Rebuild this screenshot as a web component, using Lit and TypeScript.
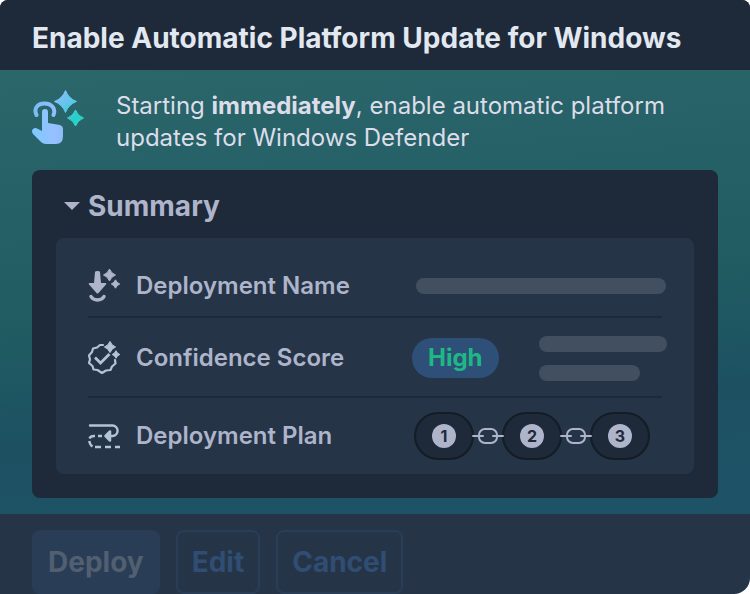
import { LitElement, html, svg, css } from "lit";
import { customElement } from "lit/decorators.js";

const sparkle = (cx: number, cy: number, r: number, fill: string) => {
  const k = r * 0.28;
  return svg`<path fill=${fill} stroke=${fill} stroke-width="1" stroke-linejoin="round"
    d="M${cx} ${cy - r}Q${cx + k} ${cy - k} ${cx + r} ${cy}Q${cx + k} ${cy + k} ${cx} ${cy + r}Q${cx - k} ${cy + k} ${cx - r} ${cy}Q${cx - k} ${cy - k} ${cx} ${cy - r}Z"/>`;
};

const touchIcon = svg`<svg class="touch" viewBox="0 0 52 56" aria-hidden="true">
  <defs>
    <linearGradient id="hand" gradientUnits="userSpaceOnUse" x1="0" y1="40" x2="31" y2="40">
      <stop offset="0" stop-color="#7dcaff"/><stop offset=".75" stop-color="#98bfff"/><stop offset="1" stop-color="#8cbcf8"/>
    </linearGradient>
    <linearGradient id="arc" gradientUnits="userSpaceOnUse" x1="2" y1="20" x2="24" y2="20">
      <stop offset="0" stop-color="#7bbcf4"/><stop offset="1" stop-color="#8fc0fb"/>
    </linearGradient>
    <linearGradient id="star" gradientUnits="userSpaceOnUse" x1="22" y1="4" x2="50" y2="34">
      <stop offset="0" stop-color="#8dbcff"/><stop offset=".45" stop-color="#58c8e4"/><stop offset=".8" stop-color="#25cfc9"/><stop offset="1" stop-color="#33dcc6"/>
    </linearGradient>
  </defs>
  <path d="M4.500 25C1.500 19 5 13.500 12.500 13.500S24 19 21.500 25" fill="none" stroke="url(#arc)" stroke-width="4" stroke-linecap="round"/>
  <path d="M10 22a3 3 0 0 1 6 0V33L28 35Q31 36 31 39V46Q31 54 24 54H14Q11 54 9 52L1 44Q-1 41 1 39Q3 37 6 39L10 41Z" fill="url(#hand)"/>
  ${sparkle(33.5, 11.5, 11, "url(#star)")}
  ${sparkle(43.5, 28, 8, "url(#star)")}
</svg>`;

const deployIcon = svg`<svg class="icon" viewBox="0 0 32 34" aria-hidden="true">
  <path d="M7 3Q7 2 9.500 2T12 3L13 14H17.500Q19 14 18 15.500L10.500 24Q9.500 25 8.500 24L1 15.500Q0 14 1.500 14H6Z" fill="#aeb4ca"/>
  <path d="M3 27.500Q5 31 9.500 31T16 27.500" fill="none" stroke="#aeb4ca" stroke-width="3.500" stroke-linecap="round"/>
  ${sparkle(21.500, 6, 6, "#aeb4ca")}
  ${sparkle(27.500, 15, 4.200, "#aeb4ca")}
</svg>`;

const scoreIcon = svg`<svg class="icon" viewBox="0 0 32 34" aria-hidden="true">
  <path d="M15 4L12 4L9 6.500L5 7.500L4 11L1 14.500L2 18.500L1 22L4.500 25L5.500 28.500L9.500 29L14 32L18 29.500L22.500 29L24 25.500L27.500 22.500L27 19" fill="none" stroke="#b3c3d8" stroke-width="2.200" stroke-linejoin="round" stroke-linecap="round"/>
  <path d="M8 17.500L12.500 22L20.500 14" fill="none" stroke="#b3c3d8" stroke-width="2.800" stroke-linecap="square"/>
  ${sparkle(22, 6, 5.600, "#b3c3d8")}
  ${sparkle(28, 13.500, 3.800, "#b3c3d8")}
</svg>`;

const planIcon = svg`<svg class="icon" viewBox="0 0 32 34" aria-hidden="true">
  <g fill="none" stroke="#b3c3d8" stroke-width="2.400">
    <path d="M2 6.500H25A5.300 5.300 0 0 1 25 17H22" stroke-linecap="round"/>
    <path d="M14 17H10M7 17H6Q2.500 17 1.500 19.500M1.200 22Q2 26 4.500 27.500M7 28H13M17 28H23M27 28H32"/>
  </g>
  <path d="M17.500 17L22 12.500V21.500Z" fill="#b3c3d8" stroke="#b3c3d8" stroke-width="2.500" stroke-linejoin="round"/>
</svg>`;

const linkIcon = html`<svg class="link" viewBox="0 0 32 18" aria-hidden="true">
  <rect x="7" y="2" width="18" height="14" rx="6" fill="none" stroke="#aeb4ca" stroke-width="2"/>
  <path d="M1 9H11M21 9H31" stroke="#aeb4ca" stroke-width="2" stroke-linecap="round"/>
</svg>`;

@customElement("app-root")
export class AppRoot extends LitElement {
  static styles = css`
    :host {
      display: flex;
      flex-direction: column;
      min-height: 100vh;
      box-sizing: border-box;
      overflow: hidden;
      border-radius: 8px 8px 16px 0;
      font-family: Inter, "Liberation Sans", sans-serif;
      color: #e2e8f0;
      background: #253547;
    }
    * { box-sizing: border-box; margin: 0; }
    header { padding: 18px 32px 12px; background: #1e293a; }
    h1 { font-size: 28px; line-height: 40px; font-weight: 700; }
    main {
      display: flex;
      flex-direction: column;
      gap: 16px;
      padding: 20px 32px 16px;
      background: linear-gradient(175deg, #2b666b 0%, #205c62 50%, #1d5162 74%, #1e5267 100%);
    }
    .intro { display: flex; gap: 32px; align-items: flex-start; }
    .touch { width: 52px; height: 56px; flex: none; }
    .intro p { font-size: 24px; line-height: 32px; color: #dcdde8; }
    .intro b { font-weight: 700; }
    .summary { padding: 16px 24px 24px; border-radius: 8px; background: #1e293a; color: #aeb4ca; }
    summary {
      display: flex;
      align-items: center;
      gap: 8px;
      padding: 0 8px;
      margin-bottom: 12px;
      list-style: none;
      font-size: 28px;
      line-height: 40px;
      font-weight: 700;
    }
    .caret { width: 16px; height: 8px; background: currentColor; clip-path: polygon(0 0, 100% 0, 50% 100%); }
    .panel { padding: 16px 0 0 32px; border-radius: 8px; background: #253547; }
    .row {
      display: grid;
      grid-template-columns: 1fr 282px;
      align-items: center;
      min-height: 64px;
      background: linear-gradient(#1e293a, #1e293a) left bottom / calc(100% - 32px) 2px no-repeat;
    }
    .row.tall { min-height: 80px; }
    .row.last { min-height: 76px; background: none; }
    .label { display: flex; align-items: center; gap: 16px; font-size: 24px; line-height: 32px; font-weight: 600; }
    .icon { width: 32px; height: 34px; flex: none; }
    .name { padding-left: 4px; }
    .bar { height: 16px; border-radius: 8px; background: #414f61; }
    .bar.long { width: 250px; }
    .bar.mid { width: 128px; }
    .bar.short { width: 101px; }
    .score { display: flex; align-items: center; gap: 40px; }
    .bars { display: grid; gap: 13px; }
    .pill {
      padding: 4px 16px;
      border-radius: 20px;
      background: #2e5078;
      color: #1fb885;
      font-size: 24px;
      line-height: 32px;
      font-weight: 700;
    }
    .plan { display: flex; align-items: center; padding: 0 0 0 2px; list-style: none; }
    .step {
      display: grid;
      place-items: center;
      width: 60px;
      height: 48px;
      border: 2px solid #141c26;
      border-radius: 24px;
      background: #1e293a;
    }
    .num {
      width: 24px;
      height: 24px;
      border-radius: 12px;
      background: #aeb4ca;
      color: #1e293a;
      font-size: 16px;
      line-height: 24px;
      font-weight: 700;
      text-align: center;
    }
    .link { width: 32px; height: 18px; margin: 0 -2px; position: relative; }
    .item { display: flex; align-items: center; }
    footer { display: flex; flex: 1; gap: 16px; padding: 16px 32px 0; }
    button {
      height: 64px;
      padding: 0 14px;
      border: 2px solid #293d56;
      border-radius: 8px;
      background: none;
      color: #304d73;
      font: 700 28px/40px Inter, "Liberation Sans", sans-serif;
    }
    .primary { background: #293d56; color: #525f70; }
  `;

  render() {
    return html`
      <header><h1>Enable Automatic Platform Update for Windows</h1></header>
      <main>
        <div class="intro">
          ${touchIcon}
          <p>Starting <b>immediately</b>, enable automatic platform updates for Windows Defender</p>
        </div>
        <details class="summary" open>
          <summary><span class="caret"></span>Summary</summary>
          <div class="panel">
            <div class="row">
              <div class="label">${deployIcon}Deployment Name</div>
              <div class="name"><div class="bar long"></div></div>
            </div>
            <div class="row tall">
              <div class="label">${scoreIcon}Confidence Score</div>
              <div class="score">
                <span class="pill">High</span>
                <div class="bars"><div class="bar mid"></div><div class="bar short"></div></div>
              </div>
            </div>
            <div class="row last">
              <div class="label">${planIcon}Deployment Plan</div>
              <ol class="plan">
                ${[1, 2, 3].map((n) => html`<li class="item">${n > 1 ? linkIcon : ""}<span class="step"><span class="num">${n}</span></span></li>`)}
              </ol>
            </div>
          </div>
        </details>
      </main>
      <footer>
        <button class="primary" type="button">Deploy</button>
        <button type="button">Edit</button>
        <button type="button">Cancel</button>
      </footer>
    `;
  }
}
